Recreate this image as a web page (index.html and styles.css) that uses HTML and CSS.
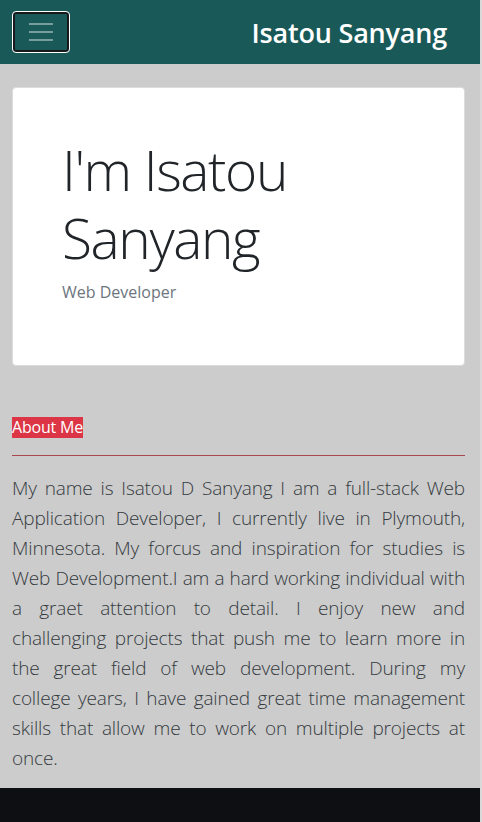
FILE: index.html
```html
<!DOCTYPE html>
<html lang="en">
<head>
<meta charset="utf-8">
<title>Isatou Sanyang</title>
<link rel="stylesheet" href="styles.css">
</head>
<body>
<div class="page">
  <nav class="navbar">
    <button class="toggler" type="button" aria-label="Toggle navigation">
      <svg class="toggler-icon" width="24" height="18" viewBox="0 0 24 18" aria-hidden="true">
        <path d="M0 1h24M0 9h24M0 17h24" stroke="rgba(255,255,255,0.55)" stroke-width="1.6" fill="none"/>
      </svg>
    </button>
    <a class="brand" href="#">Isatou Sanyang</a>
  </nav>
  <main class="content">
    <section class="hero">
      <h1 class="hero-title">I'm Isatou Sanyang</h1>
      <p class="hero-role">Web Developer</p>
    </section>
    <section class="about">
      <h2 class="about-tag">About Me</h2>
      <hr class="about-rule">
      <p class="bio">My name is Isatou D Sanyang I am a full-stack Web<br>
Application Developer, I currently live in Plymouth,<br>
Minnesota. My forcus and inspiration for studies is<br>
Web Development.I am a hard working individual with<br>
a graet attention to detail. I enjoy new and<br>
challenging projects that push me to learn more in<br>
the great field of web development. During my<br>
college years, I have gained great time management<br>
skills that allow me to work on multiple projects at<br>
once.</p>
    </section>
  </main>
  <footer class="footer"></footer>
</div>
</body>
</html>
```
FILE: styles.css
```css
html {
  background: #d9d9d9;
}
body {
  margin: 0;
  font-family: "Open Sans", "Noto Sans", sans-serif;
  color: #343a40;
}
.page {
  margin-right: 2px;
  background: #cccccc;
  min-height: 822px;
  display: flex;
  flex-direction: column;
}
.navbar {
  height: 64px;
  background: #195a59;
  display: flex;
  align-items: center;
  justify-content: space-between;
  padding: 0 33px 0 12px;
  box-sizing: border-box;
}
.toggler {
  width: 58px;
  height: 42px;
  margin: 0;
  padding: 0;
  background: transparent;
  border: 1px solid #ffffff;
  border-radius: 4px;
  box-shadow: inset 0 0 0 2px #161a1a;
  display: flex;
  align-items: center;
  justify-content: center;
}
.toggler-icon {
  display: block;
}
.brand {
  color: #ffffff;
  text-decoration: none;
  font-size: 27px;
  font-weight: 600;
  letter-spacing: -0.2px;
}
.content {
  flex: 1;
  padding: 23px 15px 0 12px;
}
.hero {
  background: #ffffff;
  border: 1px solid #dcdcdc;
  border-radius: 4px;
  padding: 48px 32px 61px 49px;
}
.hero-title {
  margin: 0 0 8px;
  font-size: 55px;
  font-weight: 300;
  line-height: 68px;
  letter-spacing: -1.4px;
  color: #212529;
}
.hero-role {
  margin: 0;
  font-size: 16px;
  line-height: 24px;
  color: #6c757d;
}
.about {
  padding-top: 50px;
}
.about-tag {
  display: inline-block;
  margin: 0;
  font-size: 16px;
  font-weight: 400;
  line-height: 21px;
  letter-spacing: -0.2px;
  color: #ffffff;
  background: #dc3545;
}
.about-rule {
  margin: 17px 0 17px;
  border: 0;
  border-top: 1px solid #a8474d;
}
.bio {
  margin: 0 0 14px;
  font-size: 19px;
  font-weight: 300;
  line-height: 30px;
  letter-spacing: -0.15px;
  text-align: justify;
  text-align-last: justify;
  color: #343a40;
}
.footer {
  height: 34px;
  background: #0e0f12;
}
```
